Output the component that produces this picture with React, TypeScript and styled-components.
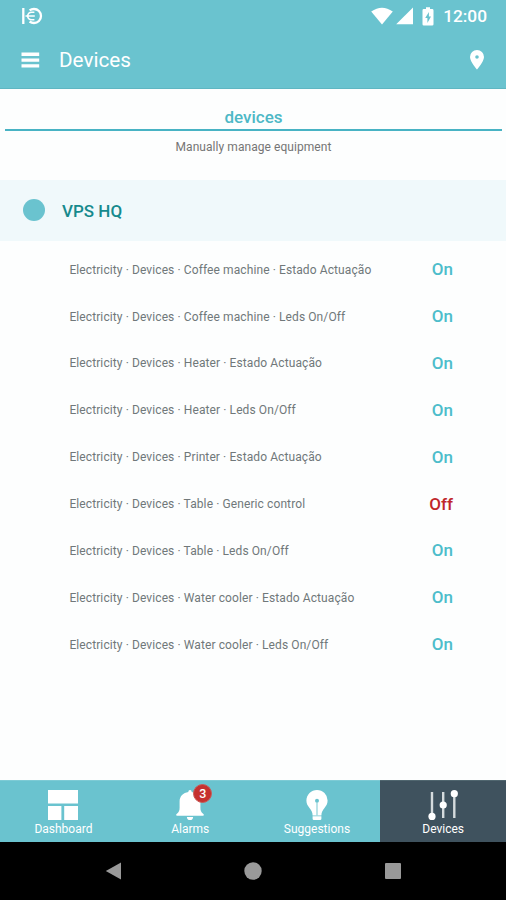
import React from "react";
import styled, { createGlobalStyle } from "styled-components";

const GlobalStyle = createGlobalStyle`
  * { box-sizing: border-box; }
  body { margin: 0; background: #fff; font-family: Roboto, sans-serif; }
`;

const Screen = styled.div`
  width: 506px;
  height: 900px;
  display: flex;
  flex-direction: column;
  background: #fdfefe;
  overflow: hidden;
`;

const Header = styled.header`
  height: 88.5px;
  background: #6ac3cf;
  border-bottom: 1px solid #5fb6c2;
  color: #fff;
`;

const StatusBar = styled.div`
  height: 32px;
  display: flex;
  align-items: center;
  justify-content: space-between;
  padding: 0 19px 0 21px;
`;

const StatusIcons = styled.div`
  display: flex;
  align-items: center;
`;

const SignalGroup = styled.div`
  display: flex;
  gap: 3px;
  margin-right: 8px;
`;

const Clock = styled.span`
  font-size: 17.3px;
  font-weight: 500;
  line-height: 20px;
  margin-left: 9px;
`;

const AppBar = styled.div`
  height: 56px;
  display: flex;
  align-items: center;
  padding: 0 21px;
`;

const Title = styled.h1`
  flex: 1;
  margin: 0 0 0 19px;
  font-size: 20.7px;
  font-weight: 400;
  line-height: 26px;
`;

const Intro = styled.section`
  height: 91.5px;
  padding: 17px 4px 0 5px;
  text-align: center;
`;

const IntroTitle = styled.h2`
  margin: 0;
  height: 25px;
  border-bottom: 2px solid #48b3c4;
  color: #4db8c6;
  font-size: 17px;
  font-weight: 500;
  line-height: 22px;
`;

const IntroText = styled.p`
  margin: 8.5px 0 0;
  color: #757575;
  font-size: 12px;
  letter-spacing: 0.06px;
  line-height: 16px;
`;

const SiteRow = styled.div`
  height: 61px;
  display: flex;
  align-items: center;
  padding: 0 23px 1px;
  background: #f0f9fb;
`;

const SiteDot = styled.span`
  width: 22px;
  height: 22px;
  border-radius: 50%;
  background: #6ac3cf;
`;

const SiteName = styled.span`
  margin: 1px 0 0 17px;
  color: #168a8d;
  font-size: 17px;
  font-weight: 500;
`;

const DeviceList = styled.ul`
  flex: 1;
  margin: 0;
  padding: 5.3px 53px 0 69.4px;
  list-style: none;
`;

const DeviceRow = styled.li`
  height: 46.87px;
  display: flex;
  align-items: center;
  justify-content: space-between;
`;

const DeviceName = styled.span`
  color: #70787a;
  font-size: 12px;
  letter-spacing: 0.1px;
  white-space: nowrap;
`;

const DeviceState = styled.span<{ $on: boolean }>`
  color: ${(p) => (p.$on ? "#4dbdcb" : "#c0262a")};
  font-size: 17px;
  font-weight: 500;
  padding-bottom: 1px;
`;

const TabBar = styled.nav`
  height: 62px;
  display: grid;
  grid-template-columns: repeat(3, 126.8px) 1fr;
  background: #6ac3cf;
`;

const Tab = styled.div<{ $active?: boolean }>`
  display: flex;
  flex-direction: column;
  align-items: center;
  padding-top: 9px;
  border-top: 1px solid ${(p) => (p.$active ? "#50666f" : "#7dcbd5")};
  background: ${(p) => (p.$active ? "#3f525e" : "#6ac3cf")};
  color: #fff;
`;

const TabIcon = styled.div`
  position: relative;
  height: 31px;
  display: flex;
`;

const TabLabel = styled.span`
  font-size: 12px;
  line-height: 16px;
`;

const Badge = styled.span`
  position: absolute;
  left: 17px;
  top: -6px;
  width: 19px;
  height: 19px;
  border-radius: 50%;
  background: #c5312f;
  border: 1px solid #c95a58;
  font-size: 12.5px;
  font-weight: 500;
  line-height: 17px;
  text-align: center;
`;

const SystemBar = styled.div`
  height: 58px;
  display: flex;
  align-items: center;
  padding-left: 105px;
  gap: 122px;
  background: #000;
`;

const LogoIcon = () => (
  <svg width="22" height="18" viewBox="0 0 22 18" fill="none" stroke="#fff" strokeWidth="2.3">
    <path d="M2.3 1v16" />
    <path d="M4.5 9h9.3M13.4 5.2H10.6Q7 5.4 6.6 9q.4 3.6 4 3.8h2.8" strokeWidth="1.6" />
    <path d="M8.6 3.4C10 2.3 11.4 2 13 2a6.9 6.9 0 0 1 0 14c-1.6 0-3-.4-4.4-1.5" />
  </svg>
);

const WifiIcon = () => (
  <svg width="22" height="18" viewBox="0 0 22 18" fill="#fff">
    <path d="M.2 4.6Q11-3.2 21.8 4.6L11 17.6Z" />
  </svg>
);

const SignalIcon = () => (
  <svg width="18" height="18" viewBox="0 0 18 18" fill="#fff">
    <path d="M17 .4V17.3H.2Z" />
  </svg>
);

const BatteryIcon = () => (
  <svg width="12" height="19" viewBox="0 0 12 19">
    <path fill="#fff" d="M4 .3h4v1.8h2.2q1.3 0 1.3 1.3v13.8q0 1.3-1.3 1.3H1.8Q.5 18.5.5 17.2V3.4q0-1.3 1.3-1.3H4z" />
    <path fill="#6ac3cf" d="M6.9 5L3.2 11h2.2v5L9 9.6H6.9z" />
  </svg>
);

const MenuIcon = () => (
  <svg width="19" height="17" viewBox="0 0 19 17" fill="#fff">
    <path d="M.5 .6h17.7v3.4H.5zM.5 6.4h17.7v3.4H.5zM.5 12.2h17.7v3.4H.5z" />
  </svg>
);

const PinIcon = () => (
  <svg width="16" height="20" viewBox="0 0 16 20" fill="#fff" fillRule="evenodd">
    <path d="M8 0a7 7 0 0 0-7 7c0 4.6 7 12.5 7 12.5S15 11.6 15 7A7 7 0 0 0 8 0zm0 5.2a1.8 1.8 0 1 1 0 3.6 1.8 1.8 0 0 1 0-3.6z" />
  </svg>
);

const DashboardIcon = () => (
  <svg width="30" height="31" viewBox="0 0 30 31" fill="#fff">
    <path d="M0 0h30v13.6H0zM0 15.9h13.4V30H0zM16.2 15.9H30V30H16.2z" />
  </svg>
);

const BellIcon = () => (
  <svg width="28" height="31" viewBox="0 0 28 31" fill="#fff">
    <path d="M12.4.9q1.6-1.6 3.2 0v1.2c5.2.7 8.8 4.3 8.8 9.4v6.2c0 2.8.7 4.6 3 6.4.8.7.5 1.7-.5 1.7H1.1c-1 0-1.3-1-.5-1.7 2.3-1.8 3-3.6 3-6.4v-6.2c0-5.1 3.6-8.7 8.8-9.4zM10.9 26.9h6.2a3.1 3.1 0 0 1-6.2 0z" />
  </svg>
);

const BulbIcon = () => (
  <svg width="22" height="31" viewBox="0 0 22 31">
    <path fill="#fff" d="M11 0A10.6 10.6 0 0 0 .4 10.6c0 3.3 1.4 5.3 3.1 7.4 1.9 2.4 3.1 4.2 3.1 7.4h8.8c0-3.2 1.2-5 3.1-7.4 1.7-2.1 3.1-4.1 3.1-7.4A10.6 10.6 0 0 0 11 0zM6.6 26.3h8.8v2.4q0 1.3-1.3 1.3H7.9q-1.3 0-1.3-1.3z" />
    <circle cx="11" cy="10.8" r="2" fill="#6ac3cf" />
    <path stroke="#8dd1d9" strokeWidth="1.2" d="M11 12v13.5" />
  </svg>
);

const SlidersIcon = () => (
  <svg width="30" height="31" viewBox="0 0 30 31" fill="#fff">
    <path stroke="#d5dbdd" strokeWidth="2.4" d="M4 2v26M15.2 2v26M26.3 2v26" />
    <circle cx="4" cy="26.4" r="3.6" />
    <circle cx="15.2" cy="15" r="3.6" />
    <circle cx="26.3" cy="3.7" r="3.6" />
  </svg>
);

const BackIcon = () => (
  <svg width="17" height="18" viewBox="0 0 17 18" fill="#999">
    <path d="M.8 9L16 .4v17.2z" />
  </svg>
);

const HomeIcon = () => (
  <svg width="18" height="18" viewBox="0 0 18 18" fill="#999">
    <circle cx="9" cy="9" r="8.7" />
  </svg>
);

const RecentsIcon = () => (
  <svg width="18" height="18" viewBox="0 0 18 18" fill="#999">
    <rect x="1" y="1" width="16" height="16" rx="1" />
  </svg>
);

const devices = [
  { name: "Coffee machine · Estado Actuação", on: true },
  { name: "Coffee machine · Leds On/Off", on: true },
  { name: "Heater · Estado Actuação", on: true },
  { name: "Heater · Leds On/Off", on: true },
  { name: "Printer · Estado Actuação", on: true },
  { name: "Table · Generic control", on: false },
  { name: "Table · Leds On/Off", on: true },
  { name: "Water cooler · Estado Actuação", on: true },
  { name: "Water cooler · Leds On/Off", on: true },
];

const tabs = [
  { label: "Dashboard", icon: <DashboardIcon /> },
  { label: "Alarms", icon: <BellIcon />, badge: 3 },
  { label: "Suggestions", icon: <BulbIcon /> },
  { label: "Devices", icon: <SlidersIcon />, active: true },
];

export default function App() {
  return (
    <>
      <GlobalStyle />
      <Screen>
        <Header>
          <StatusBar>
            <LogoIcon />
            <StatusIcons>
              <SignalGroup>
                <WifiIcon />
                <SignalIcon />
              </SignalGroup>
              <BatteryIcon />
              <Clock>12:00</Clock>
            </StatusIcons>
          </StatusBar>
          <AppBar>
            <MenuIcon />
            <Title>Devices</Title>
            <PinIcon />
          </AppBar>
        </Header>
        <Intro>
          <IntroTitle>devices</IntroTitle>
          <IntroText>Manually manage equipment</IntroText>
        </Intro>
        <SiteRow>
          <SiteDot />
          <SiteName>VPS HQ</SiteName>
        </SiteRow>
        <DeviceList>
          {devices.map((d) => (
            <DeviceRow key={d.name}>
              <DeviceName>{`Electricity · Devices · ${d.name}`}</DeviceName>
              <DeviceState $on={d.on}>{d.on ? "On" : "Off"}</DeviceState>
            </DeviceRow>
          ))}
        </DeviceList>
        <TabBar>
          {tabs.map((t) => (
            <Tab key={t.label} $active={t.active}>
              <TabIcon>
                {t.icon}
                {t.badge && <Badge>{t.badge}</Badge>}
              </TabIcon>
              <TabLabel>{t.label}</TabLabel>
            </Tab>
          ))}
        </TabBar>
        <SystemBar>
          <BackIcon />
          <HomeIcon />
          <RecentsIcon />
        </SystemBar>
      </Screen>
    </>
  );
}
